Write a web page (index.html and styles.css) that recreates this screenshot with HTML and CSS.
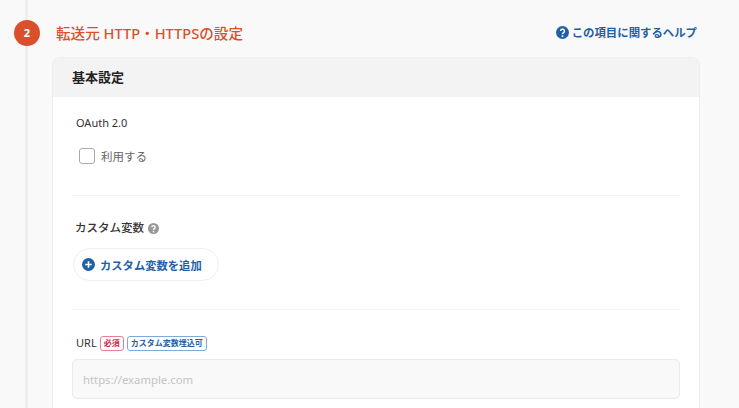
FILE: index.html
```html
<!DOCTYPE html>
<html lang="ja">
<head>
    <meta charset="UTF-8">
    <title>転送元 HTTP・HTTPSの設定</title>
    <link rel="stylesheet" href="styles.css">
</head>
<body>
    <section class="step">
        <span class="step-num">2</span>
        <div class="step-head">
            <h2>転送元 HTTP・HTTPSの設定</h2>
            <a class="help-link" href="#">
                <svg class="icon" viewBox="0 0 16 16" width="13" height="13">
                    <circle cx="8" cy="8" r="8" fill="#1f5fa8"/>
                    <path d="M5.6 6.2a2.4 2.3 0 1 1 3.7 1.9c-.9.6-1.3 1-1.3 1.9" fill="none" stroke="#fff" stroke-width="1.9"/>
                    <circle cx="8" cy="12.6" r="1.2" fill="#fff"/>
                </svg>
                この項目に関するヘルプ
            </a>
        </div>

        <div class="card">
            <div class="card-head">基本設定</div>
            <div class="card-body">
                <div class="field">
                    <div class="label">OAuth 2.0</div>
                    <label class="check">
                        <input type="checkbox">
                        <span>利用する</span>
                    </label>
                </div>

                <div class="field">
                    <div class="label label-strong">
                        カスタム変数
                        <svg class="icon" viewBox="0 0 16 16" width="11" height="11">
                            <circle cx="8" cy="8" r="8" fill="#999"/>
                            <path d="M5.6 6.2a2.4 2.3 0 1 1 3.7 1.9c-.9.6-1.3 1-1.3 1.9" fill="none" stroke="#fff" stroke-width="1.9"/>
                            <circle cx="8" cy="12.6" r="1.2" fill="#fff"/>
                        </svg>
                    </div>
                    <button class="add-btn">
                        <svg class="icon" viewBox="0 0 16 16" width="13" height="13">
                            <circle cx="8" cy="8" r="8" fill="#1f5fa8"/>
                            <path d="M8 4v8M4 8h8" stroke="#fff" stroke-width="2"/>
                        </svg>
                        カスタム変数を追加
                    </button>
                </div>

                <div class="field field-last">
                    <div class="label label-url">
                        URL
                        <span class="tag tag-red">必須</span>
                        <span class="tag tag-blue">カスタム変数埋込可</span>
                    </div>
                    <input class="text-input" type="text" placeholder="https://example.com">
                </div>
            </div>
        </div>
    </section>
</body>
</html>
```

FILE: styles.css
```css
html, body {
    height: 408px;
    overflow: hidden;
}
body {
    margin: 0;
    background: #f9f9f9;
    font-family: "Noto Sans", "Noto Sans CJK JP", sans-serif;
    color: #333;
}
.step {
    position: relative;
    margin-left: 25px;
    height: 408px;
    padding: 0 39px 0 24px;
    border-left: 3px solid #eeeeee;
}
.step-num {
    position: absolute;
    left: -14px;
    top: 20px;
    width: 26px;
    height: 26px;
    border-radius: 50%;
    background: #d9512c;
    color: #fff;
    font-size: 11px;
    font-weight: 700;
    line-height: 26px;
    text-align: center;
}
.step-head {
    display: flex;
    justify-content: space-between;
    align-items: center;
    height: 57px;
    padding: 8px 3px 0 4px;
    box-sizing: border-box;
}
.step-head h2 {
    margin: 0;
    font-size: 14.6px;
    font-weight: 500;
    color: #d9512c;
}
.help-link {
    display: flex;
    align-items: center;
    gap: 3px;
    margin-top: -1px;
    font-size: 11.4px;
    font-weight: 700;
    color: #1f5fa8;
    text-decoration: none;
}
.icon { flex: none; }
.card {
    height: 351px;
    box-sizing: border-box;
    background: #fff;
    border: 1px solid #eeeeee;
    border-bottom: 0;
    border-radius: 8px 8px 0 0;
    overflow: hidden;
}
.card-head {
    height: 39px;
    padding-left: 19px;
    background: #f3f3f3;
    font-size: 13px;
    font-weight: 700;
    line-height: 39px;
    color: #222;
}
.card-body {
    padding: 0 19px;
}
.field {
    padding-top: 17px;
    height: 81px;
    border-bottom: 1px solid #f3f3f3;
}
.field + .field {
    padding-top: 24px;
    height: 89px;
}
.field-last {
    border-bottom: 0;
}
.label {
    padding: 1px 0 0 4px;
    font-size: 11px;
    line-height: 16px;
    color: #333;
}
.label-strong {
    display: flex;
    align-items: center;
    gap: 4px;
    padding: 0 0 0 3px;
    font-size: 11.5px;
    font-weight: 500;
}
.label-url {
    display: flex;
    align-items: center;
    gap: 3px;
}
.check {
    display: flex;
    align-items: center;
    gap: 6px;
    margin: 17px 0 0 7px;
    font-size: 11.5px;
    color: #666;
}
.check input {
    appearance: none;
    width: 16px;
    height: 16px;
    margin: 0;
    background: #fff;
    border: 1px solid #aaa;
    border-radius: 3px;
}
.add-btn {
    display: flex;
    align-items: center;
    gap: 5px;
    margin: 12px 0 0 1px;
    height: 33px;
    padding: 0 16px 0 8px;
    background: #fff;
    border: 1px solid #eeeeee;
    border-radius: 17px;
    font-family: inherit;
    font-size: 11.3px;
    font-weight: 700;
    color: #1f5fa8;
}
.tag {
    height: 13px;
    padding: 0 3px;
    border-radius: 3px;
    font-size: 8px;
    font-weight: 700;
    line-height: 12px;
    background: #fff;
}
.tag-red {
    color: #cc1f45;
    border: 1px solid #e58099;
}
.tag-blue {
    color: #1f5fa8;
    border: 1px solid #7fa9d8;
}
.text-input {
    display: block;
    width: 100%;
    height: 40px;
    margin-top: 8px;
    padding: 0 10px;
    box-sizing: border-box;
    background: #f9f9f9;
    border: 1px solid #ebebeb;
    border-radius: 5px;
    font-family: inherit;
    font-size: 11.3px;
}
.text-input::placeholder {
    color: #c4c4c4;
}
```
